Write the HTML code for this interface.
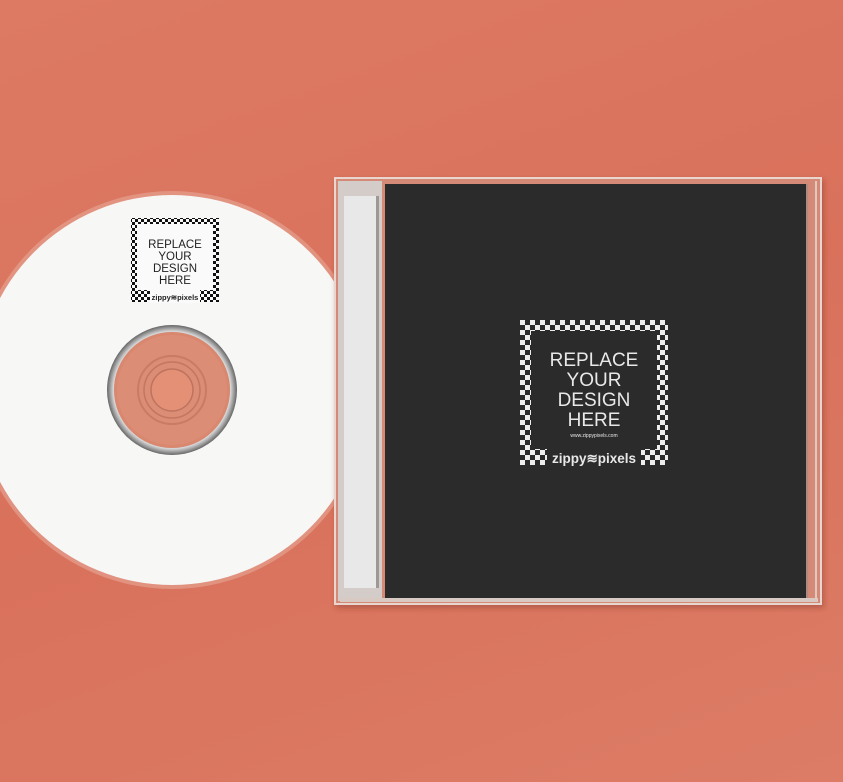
<!DOCTYPE html>
<html><head><meta charset="utf-8"><style>
html,body{margin:0;padding:0}
body{width:843px;height:782px;overflow:hidden;background:linear-gradient(160deg,#dd7a64 0%,#d9715b 50%,#dc7c66 100%);font-family:"Liberation Sans",sans-serif}
</style></head><body>
<svg width="843" height="782" viewBox="0 0 843 782" xmlns="http://www.w3.org/2000/svg" style="position:absolute;left:0;top:0">
<defs>
<pattern id="ckW" width="10" height="10" patternUnits="userSpaceOnUse"><rect width="10" height="10" fill="#2a2a2a"/><rect width="5" height="5" fill="#eee"/><rect x="5" y="5" width="5" height="5" fill="#eee"/></pattern>
<pattern id="ckB" width="6" height="6" patternUnits="userSpaceOnUse"><rect width="6" height="6" fill="#fafafa"/><rect width="3" height="3" fill="#111"/><rect x="3" y="3" width="3" height="3" fill="#111"/></pattern>
<radialGradient id="ring" cx="50%" cy="50%" r="50%"><stop offset="80%" stop-color="#555"/><stop offset="90%" stop-color="#d8d8d8"/><stop offset="100%" stop-color="#666"/></radialGradient>
<filter id="sh" x="-10%" y="-10%" width="120%" height="120%"><feDropShadow dx="2" dy="3" stdDeviation="3" flood-color="#6a2a1a" flood-opacity="0.35"/></filter>
</defs>
<!-- disc -->
<circle cx="172" cy="390" r="199" fill="#e6a898" opacity="0.6"/>
<circle cx="172" cy="390" r="195" fill="#f7f7f6"/>
<circle cx="172" cy="390" r="65" fill="url(#ring)"/>
<circle cx="172" cy="390" r="58" fill="#d9876f"/>
<circle cx="172" cy="390" r="55" fill="#dc8d75"/>
<circle cx="172" cy="390" r="34" fill="none" stroke="#c97b64" stroke-width="2"/>
<circle cx="172" cy="390" r="28" fill="none" stroke="#c47660" stroke-width="1.5"/>
<circle cx="172" cy="390" r="21" fill="#e39077" stroke="#bf735d" stroke-width="1.5"/>
<!-- disc label -->
<rect x="131" y="218" width="88" height="84" fill="url(#ckB)"/>
<rect x="137" y="224" width="76" height="66" fill="#fafafa"/>
<rect x="150" y="290" width="50" height="13" fill="#fafafa"/>
<g font-family="Liberation Sans,sans-serif" fill="#222" text-anchor="middle" font-size="11.5">
<text x="175" y="248">REPLACE</text><text x="175" y="260">YOUR</text><text x="175" y="272">DESIGN</text><text x="175" y="284">HERE</text>
</g>
<text x="175" y="300" font-size="7.5" font-weight="bold" fill="#222" text-anchor="middle" font-family="Liberation Sans,sans-serif">zippy≋pixels</text>
<!-- case -->
<g filter="url(#sh)">
<rect x="335" y="178" width="486" height="426" fill="#d58a78" stroke="#e8d6cf" stroke-width="2"/>
</g>
<rect x="338" y="181" width="44" height="420" fill="#d3ccc9"/>
<rect x="344" y="196" width="32" height="392" fill="#e8e8e8"/>
<rect x="376" y="196" width="3" height="392" fill="#9d9796"/>
<rect x="340" y="598" width="478" height="4" fill="#d9c9c3"/>
<rect x="385" y="184" width="421" height="414" fill="#2b2b2b"/>
<rect x="806" y="184" width="2" height="414" fill="#b08a80"/>
<rect x="815" y="181" width="2" height="420" fill="#e2c9c0"/>
<!-- cover label -->
<rect x="520" y="320" width="148" height="145" fill="url(#ckW)"/>
<rect x="531" y="331" width="126" height="118" fill="#2b2b2b"/>
<rect x="547" y="449" width="94" height="17" fill="#2b2b2b"/>
<g font-family="Liberation Sans,sans-serif" fill="#e8e8e8" text-anchor="middle" font-size="19">
<text x="594" y="366">REPLACE</text><text x="594" y="386">YOUR</text><text x="594" y="406">DESIGN</text><text x="594" y="426">HERE</text>
<text x="594" y="437" font-size="5">www.zippypixels.com</text>
<text x="594" y="463" font-size="13.5" font-weight="bold">zippy≋pixels</text>
</g>
</svg>
</body></html>
